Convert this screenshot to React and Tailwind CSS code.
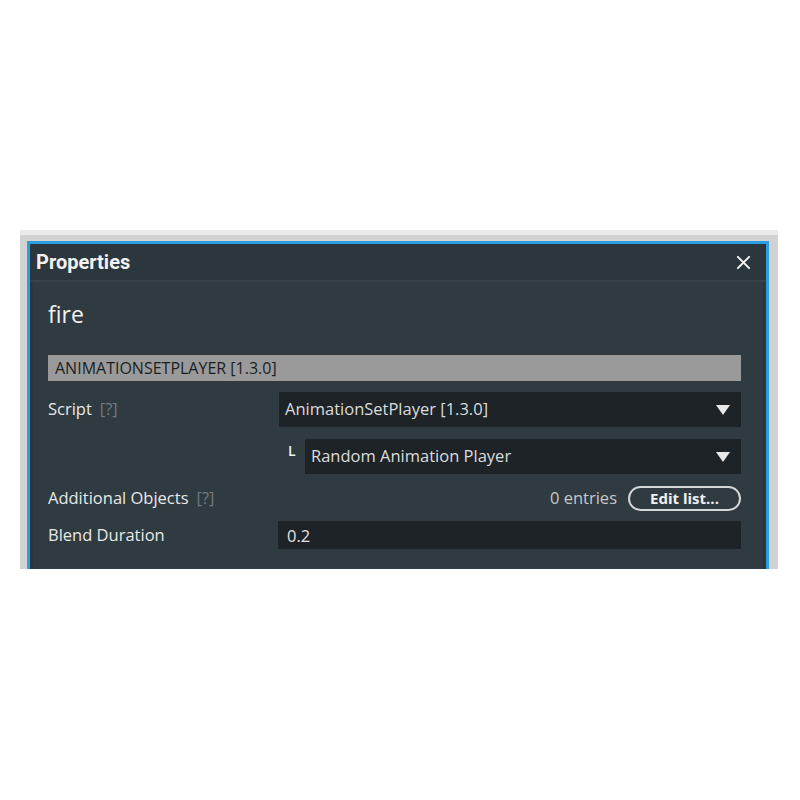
import React from "react";

function Tri() {
  return (
    <svg width="16" height="12" viewBox="0 0 16 12" className="shrink-0">
      <path d="M1 1 H15 L8 11 Z" fill="#e8e8e8" />
    </svg>
  );
}

function Help() {
  return <span className="ml-[8px] text-[#6f7a80]">[?]</span>;
}

export default function App() {
  return (
    <div className="min-h-[800px] bg-white pt-[230px] px-[20px] pr-[22px]" style={{ fontFamily: "'Open Sans', 'Noto Sans', sans-serif" }}>
      <div className="h-[339px] overflow-hidden bg-[#d2d2d2] border-t-[5px] border-[#ebebeb] pt-[6px] pl-[7px] pr-[9px]">
        <div className="h-[400px] border-[3px] border-[#2d9ee0] bg-[#2c363d]">
          <div className="h-[38px] flex items-center justify-between pl-[6px] pr-[15px] border-b-2 border-[#37424a]">
            <span className="text-[20px] font-bold text-[#f2f2f2]" style={{ fontFamily: "Roboto, sans-serif" }}>Properties</span>
            <svg width="15" height="15" viewBox="0 0 16 16">
              <path d="M2 2 L14 14 M14 2 L2 14" stroke="#f0f0f0" strokeWidth="2.2" strokeLinecap="round" />
            </svg>
          </div>
          <div className="mx-[3px] h-[400px] bg-[#2f3a41] pl-[15px] pr-[22px] pt-[18px] text-[#e8e8e8] text-[16.5px]">
            <div className="text-[23px] leading-[28px] text-[#f2f2f2]">fire</div>
            <div className="mt-[27px] h-[26px] bg-[#9a9a9a] flex items-center pl-[7px] text-[16px] text-[#1b1f22]">
              ANIMATIONSETPLAYER [1.3.0]
            </div>
            <div className="mt-[11px] flex items-center">
              <div className="w-[231px] shrink-0">
                Script<Help />
              </div>
              <div className="flex-1 h-[35px] bg-[#1d2327] flex items-center justify-between pl-[6px] pr-[10px] text-[#dcdcdc]">
                <span>AnimationSetPlayer [1.3.0]</span>
                <Tri />
              </div>
            </div>
            <div className="mt-[12px] flex items-center">
              <div className="w-[231px] shrink-0" />
              <div className="w-[26px] shrink-0 self-start pt-[1px] pl-[9px] text-[14px] font-semibold text-[#f0f0f0]">L</div>
              <div className="flex-1 h-[35px] bg-[#1d2327] flex items-center justify-between pl-[6px] pr-[10px] text-[#dcdcdc]">
                <span>Random Animation Player</span>
                <Tri />
              </div>
            </div>
            <div className="mt-[12px] flex items-center h-[24px]">
              <div className="flex-1">
                Additional Objects<Help />
              </div>
              <span className="text-[#c8c8c8] mr-[11px]">0 entries</span>
              <div className="h-[25px] w-[113px] rounded-full border-2 border-[#d6d6d6] flex items-center justify-center text-[15px] font-bold text-[#f0f0f0]">
                Edit list...
              </div>
            </div>
            <div className="mt-[11px] flex items-center">
              <div className="w-[230px] shrink-0">Blend Duration</div>
              <div className="flex-1 h-[28px] bg-[#1d2327] flex items-center pl-[9px] pt-[3px] text-[#e4e4e4]">0.2</div>
            </div>
          </div>
        </div>
      </div>
    </div>
  );
}
